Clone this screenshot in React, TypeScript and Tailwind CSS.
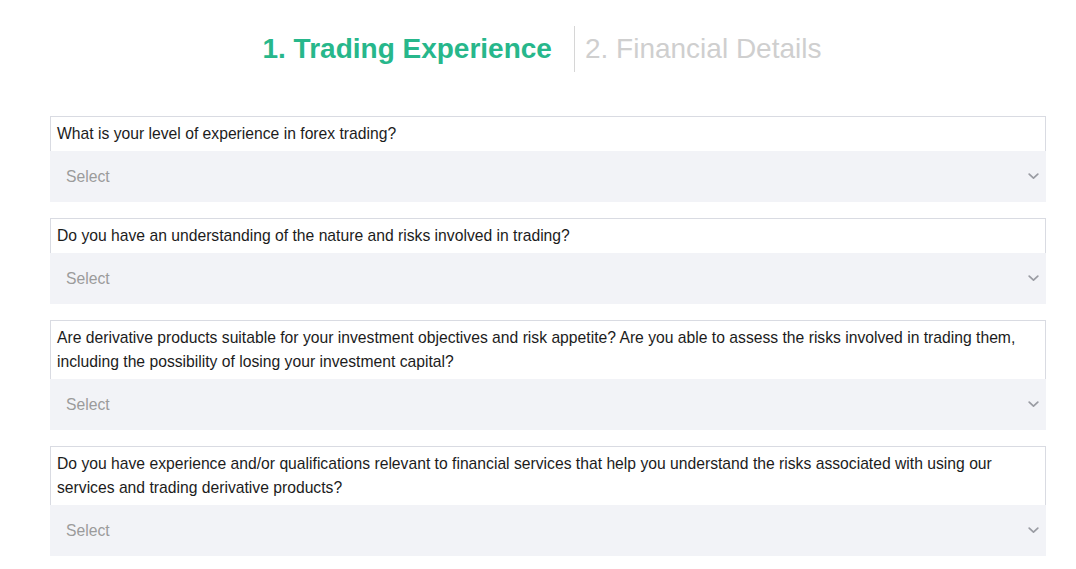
import React from "react";

const questions = [
  "What is your level of experience in forex trading?",
  "Do you have an understanding of the nature and risks involved in trading?",
  "Are derivative products suitable for your investment objectives and risk appetite? Are you able to assess the risks involved in trading them, including the possibility of losing your investment capital?",
  "Do you have experience and/or qualifications relevant to financial services that help you understand the risks associated with using our services and trading derivative products?",
];

function Chevron() {
  return (
    <svg width="11" height="7" viewBox="0 0 11 7" fill="none">
      <path d="M1.2 1.2l4.3 4 4.3-4" stroke="#9a9ca3" strokeWidth="1.7" strokeLinecap="round" strokeLinejoin="round" />
    </svg>
  );
}

export default function App() {
  return (
    <div className="w-[1076px] h-[569px] bg-white overflow-hidden" style={{ fontFamily: '"Liberation Sans", Arial, sans-serif' }}>
      <div className="flex justify-center items-center pt-[26px] h-[72px] pl-[8px]">
        <div className="text-[28px] font-bold text-[#27b78b] pr-[22px] leading-[44px]">1. Trading Experience</div>
        <div className="w-px h-[46px] bg-[#d6d6d6]" />
        <div className="text-[28px] text-[#cfcfcf] pl-[10px] leading-[44px]">2. Financial Details</div>
      </div>
      <div className="ml-[50px] w-[996px] mt-[44px] flex flex-col gap-[16px]">
        {questions.map((q, i) => (
          <div key={i} className="flex flex-col">
            <div className="border border-b-0 border-[#d9dbe2] px-[6px] pt-[5px] pb-[5px] text-[15.7px] leading-[24px] text-[#1c1c1c]">
              {q}
            </div>
            <div className="h-[51px] bg-[#f2f3f7] flex items-center justify-between pl-[16px] pr-[7px]">
              <span className="text-[15.7px] text-[#9b9b9b]">Select</span>
              <Chevron />
            </div>
          </div>
        ))}
      </div>
    </div>
  );
}
